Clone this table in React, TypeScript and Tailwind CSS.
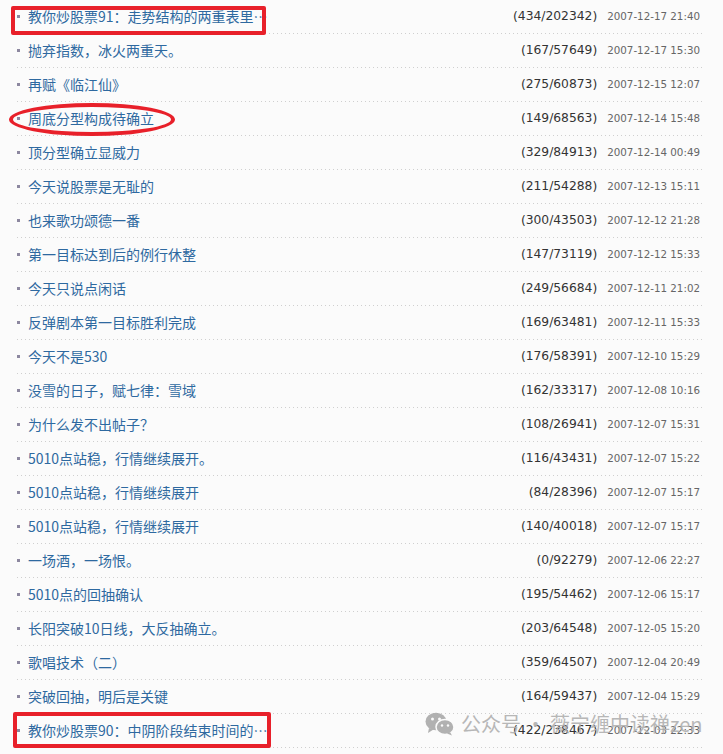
import React from "react";

const rows: [string, string, string][] = [
  ["教你炒股票91：走势结构的两重表里…", "(434/202342)", "2007-12-17 21:40"],
  ["抛弃指数，冰火两重天。", "(167/57649)", "2007-12-17 15:30"],
  ["再赋《临江仙》", "(275/60873)", "2007-12-15 12:07"],
  ["周底分型构成待确立", "(149/68563)", "2007-12-14 15:48"],
  ["顶分型确立显威力", "(329/84913)", "2007-12-14 00:49"],
  ["今天说股票是无耻的", "(211/54288)", "2007-12-13 15:11"],
  ["也来歌功颂德一番", "(300/43503)", "2007-12-12 21:28"],
  ["第一目标达到后的例行休整", "(147/73119)", "2007-12-12 15:33"],
  ["今天只说点闲话", "(249/56684)", "2007-12-11 21:02"],
  ["反弹剧本第一目标胜利完成", "(169/63481)", "2007-12-11 15:33"],
  ["今天不是530", "(176/58391)", "2007-12-10 15:29"],
  ["没雪的日子，赋七律：雪域", "(162/33317)", "2007-12-08 10:16"],
  ["为什么发不出帖子？", "(108/26941)", "2007-12-07 15:31"],
  ["5010点站稳，行情继续展开。", "(116/43431)", "2007-12-07 15:22"],
  ["5010点站稳，行情继续展开", "(84/28396)", "2007-12-07 15:17"],
  ["5010点站稳，行情继续展开", "(140/40018)", "2007-12-07 15:17"],
  ["一场酒，一场恨。", "(0/92279)", "2007-12-06 22:27"],
  ["5010点的回抽确认", "(195/54462)", "2007-12-06 15:17"],
  ["长阳突破10日线，大反抽确立。", "(203/64548)", "2007-12-05 15:20"],
  ["歌唱技术（二）", "(359/64507)", "2007-12-04 20:49"],
  ["突破回抽，明后是关键", "(164/59437)", "2007-12-04 15:29"],
  ["教你炒股票90：中阴阶段结束时间的…", "(422/238467)", "2007-12-03 22:33"],
];

function WeChatIcon() {
  return (
    <svg width="30" height="24" viewBox="0 0 30 24">
      <ellipse cx="11" cy="9.5" rx="10.5" ry="8.8" fill="#a9a9a9" />
      <path d="M4 16 L3 21 L8.5 17.5 Z" fill="#a9a9a9" />
      <ellipse cx="20" cy="15" rx="9" ry="7.6" fill="#a9a9a9" stroke="#fbfbfb" strokeWidth="1.5" />
      <path d="M25 20 L27 23.5 L22 21.5 Z" fill="#a9a9a9" />
      <circle cx="7.5" cy="7" r="1.5" fill="#fbfbfb" />
      <circle cx="14.5" cy="7" r="1.5" fill="#fbfbfb" />
      <circle cx="17" cy="13.5" r="1.2" fill="#fbfbfb" />
      <circle cx="23" cy="13.5" r="1.2" fill="#fbfbfb" />
    </svg>
  );
}

export default function App() {
  return (
    <div className="relative w-[723px] h-[754px] overflow-hidden bg-[#fbfbfb]">
      <div className="flex flex-col pl-[17px] pr-[21px]">
        {rows.map(([title, count, date], i) => (
          <div key={i} className="flex flex-col">
            <div className="flex items-center h-[33px] pr-[2px] pb-[1px]">
              <span className="w-[3px] h-[3px] bg-[#8d88a0] mr-[8px] shrink-0" />
              <span
                className="text-[14px] text-[#2e69a0] leading-none"
                style={{ fontFamily: '"Noto Sans CJK SC", sans-serif' }}
              >
                {title}
              </span>
              <span className="flex-1" />
              <span
                className="text-[12.3px] text-[#333333] leading-none"
                style={{ fontFamily: '"DejaVu Sans", sans-serif' }}
              >
                {count}
              </span>
              <span
                className="ml-[10px] text-[10.3px] text-[#666666] leading-none"
                style={{ fontFamily: '"DejaVu Sans", sans-serif' }}
              >
                {date}
              </span>
            </div>
            <div className="h-px bg-[repeating-linear-gradient(to_right,#cfcfcf_0_1px,transparent_1px_4px)]" />
          </div>
        ))}
      </div>

      {/* watermark */}
      <div className="absolute left-[425px] top-[712px] flex items-center gap-[6px] opacity-90 pointer-events-none">
        <WeChatIcon />
        <span
          className="text-[20px] text-[#b0b0b0] leading-none"
          style={{ fontFamily: '"Noto Sans CJK SC", sans-serif' }}
        >
          公众号 · 薇宁缠中读禅zen
        </span>
      </div>

      {/* red annotations */}
      <div className="absolute left-[11px] top-[6px] w-[255px] h-[29px] border-[4px] border-[#e8202a] rounded-[2px]" />
      <div className="absolute left-[9px] top-[103px] w-[166px] h-[33px] border-[4px] border-[#e8202a] rounded-[50%]" />
      <div className="absolute left-[13px] top-[712px] w-[258px] h-[36px] border-[4px] border-[#e8202a] rounded-[2px]" />
    </div>
  );
}
